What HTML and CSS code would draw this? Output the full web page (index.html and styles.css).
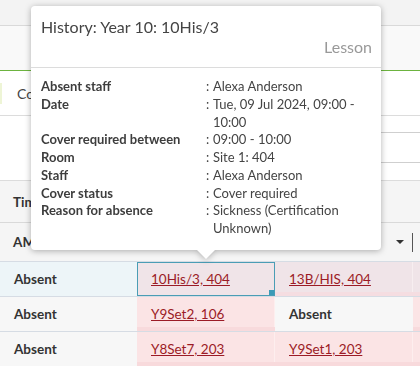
FILE: index.html
```html
<!DOCTYPE html>
<html lang="en">
<head>
    <meta charset="UTF-8">
    <meta name="viewport" content="width=device-width, initial-scale=1.0">
    <title>Cover - Absences</title>
    <link rel="stylesheet" href="styles.css">
</head>
<body>

<div class="page">
    <div class="topbar"></div>
    <div class="tabs"></div>

    <!-- toolbar -->
    <div class="toolbar">
        <span class="chip"></span>
        <span class="toolbar-label">Cover</span>
    </div>

    <div class="filters">
        <div class="filter-box"></div>
    </div>

    <!-- grid header -->
    <div class="grid-head">
        <div class="head-row">Time</div>
        <div class="head-row head-row-am">
            <span>AM</span>
            <span class="caret"></span>
            <span class="head-sep"></span>
        </div>
    </div>

    <!-- grid rows -->
    <div class="grid">
        <div class="row row-selected">
            <div class="cell cell-name">Absent</div>
            <div class="cell cell-lesson cell-active"><a href="#">10His/3, 404</a><span class="handle"></span></div>
            <div class="cell cell-lesson"><a href="#">13B/HIS, 404</a></div>
            <div class="cell cell-lesson"></div>
        </div>
        <div class="row">
            <div class="cell cell-name">Absent</div>
            <div class="cell cell-lesson"><a href="#">Y9Set2, 106</a></div>
            <div class="cell cell-name">Absent</div>
            <div class="cell cell-lesson"></div>
        </div>
        <div class="row">
            <div class="cell cell-name">Absent</div>
            <div class="cell cell-lesson"><a href="#">Y8Set7, 203</a></div>
            <div class="cell cell-lesson"><a href="#">Y9Set1, 203</a></div>
            <div class="cell cell-lesson"></div>
        </div>
    </div>

    <!-- hover card for the active lesson -->
    <div class="tooltip">
        <div class="tip-head">
            <div class="tip-title">History: Year 10: 10His/3</div>
            <div class="tip-type">Lesson</div>
        </div>
        <div class="tip-body">
            <span class="tip-key">Absent staff</span><span class="tip-colon">:</span><span class="tip-val">Alexa Anderson</span>
            <span class="tip-key">Date</span><span class="tip-colon">:</span><span class="tip-val">Tue, 09 Jul 2024, 09:00 - 10:00</span>
            <span class="tip-key">Cover required between</span><span class="tip-colon">:</span><span class="tip-val">09:00 - 10:00</span>
            <span class="tip-key">Room</span><span class="tip-colon">:</span><span class="tip-val">Site 1: 404</span>
            <span class="tip-key">Staff</span><span class="tip-colon">:</span><span class="tip-val">Alexa Anderson</span>
            <span class="tip-key">Cover status</span><span class="tip-colon">:</span><span class="tip-val">Cover required</span>
            <span class="tip-key">Reason for absence</span><span class="tip-colon">:</span><span class="tip-val">Sickness (Certification Unknown)</span>
        </div>
    </div>
</div>

</body>
</html>
```

FILE: styles.css
```css
body {
    margin: 0;
    font-family: Lato, "Open Sans", sans-serif;
    font-size: 13px;
    color: #333;
    background-color: #fff;
}
.page {
    position: relative;
    width: 420px;
    height: 366px;
    overflow: hidden;
}
.topbar {
    height: 25px;
    background-color: #f3f3f3;
    border-bottom: 1px solid #d9d9d9;
}
.tabs {
    height: 44px;
    background-color: #f9f9f9;
    border-bottom: 1px solid #6cb33f;
}
.toolbar {
    height: 44px;
    display: flex;
    align-items: center;
    border-bottom: 1px solid #dcdcdc;
}
.chip {
    width: 2px;
    height: 21px;
    background-color: #eef5d6;
}
.toolbar-label {
    margin-left: 15px;
    color: #444;
    font-size: 14px;
}
.filters {
    height: 64px;
    display: flex;
    justify-content: flex-end;
    border-bottom: 1px solid #dcdcdc;
}
.filter-box {
    width: 120px;
    height: 29px;
    margin-top: 16px;
    border-top: 1px solid #cfcfcf;
    border-bottom: 1px solid #cfcfcf;
}
.grid-head {
    background-color: #f5f5f5;
}
.head-row {
    height: 41px;
    display: flex;
    align-items: center;
    padding-left: 13px;
    font-size: 13.5px;
    font-weight: bold;
    color: #333;
    border-bottom: 1px solid #d9d9d9;
}
.head-row-am {
    height: 38px;
    border-bottom-color: #d6dce4;
}
.caret {
    margin-left: auto;
    width: 0;
    height: 0;
    border-left: 4px solid transparent;
    border-right: 4px solid transparent;
    border-top: 4px solid #333;
}
.head-sep {
    width: 1px;
    height: 19px;
    margin: 0 7px 0 8px;
    background-color: #555;
}
.row {
    display: flex;
    height: 34px;
    border-bottom: 1px solid #d6dce4;
    font-size: 13.5px;
}
.cell {
    position: relative;
    box-sizing: border-box;
    width: 138px;
    flex-shrink: 0;
    display: flex;
    align-items: center;
    padding-left: 14px;
}
.cell:first-child {
    width: 137px;
}
.cell:last-child {
    width: 7px;
}
.cell-name {
    background-color: #f7f7f7;
    font-weight: bold;
    color: #333;
}
.cell-lesson {
    background-color: #fbe4e5;
    box-shadow: inset 0 -4px 0 #f8dadc, inset -1px 0 0 #fdeeee;
}
.cell-lesson a {
    color: #9b1b26;
}
.row-selected .cell-name {
    background-color: #edf5f8;
}
.row-selected .cell-lesson {
    background-color: #f0e4e8;
    box-shadow: inset 0 -4px 0 #f5dde1, inset -1px 0 0 #f7eef0;
}
.row-selected .cell-active {
    padding-left: 13px;
    border: 1px solid #4a9db5;
    box-shadow: none;
}
.handle {
    position: absolute;
    right: 0;
    bottom: 0;
    width: 5px;
    height: 5px;
    background-color: #3b9bb7;
}
.tooltip {
    position: absolute;
    left: 31px;
    top: 6px;
    width: 350px;
    background-color: #fff;
    border-radius: 4px;
    filter: drop-shadow(0 1px 3px rgba(0, 0, 0, 0.3));
}
.tooltip::after {
    content: "";
    position: absolute;
    left: 166px;
    bottom: -9px;
    border-left: 9px solid transparent;
    border-right: 9px solid transparent;
    border-top: 9px solid #fff;
}
.tip-head {
    padding: 11px 9px 10px 10px;
    border-bottom: 1px solid #dcdcdc;
}
.tip-title {
    font-size: 16px;
    line-height: 20px;
    color: #444;
}
.tip-type {
    font-size: 16px;
    line-height: 20px;
    text-align: right;
    color: #999;
}
.tip-body {
    display: grid;
    grid-template-columns: 165px 7px 1fr;
    padding: 10px 10px 12px 10px;
    line-height: 17.75px;
    color: #444;
}
.tip-key {
    font-weight: bold;
    color: #3d3d3d;
}
```
